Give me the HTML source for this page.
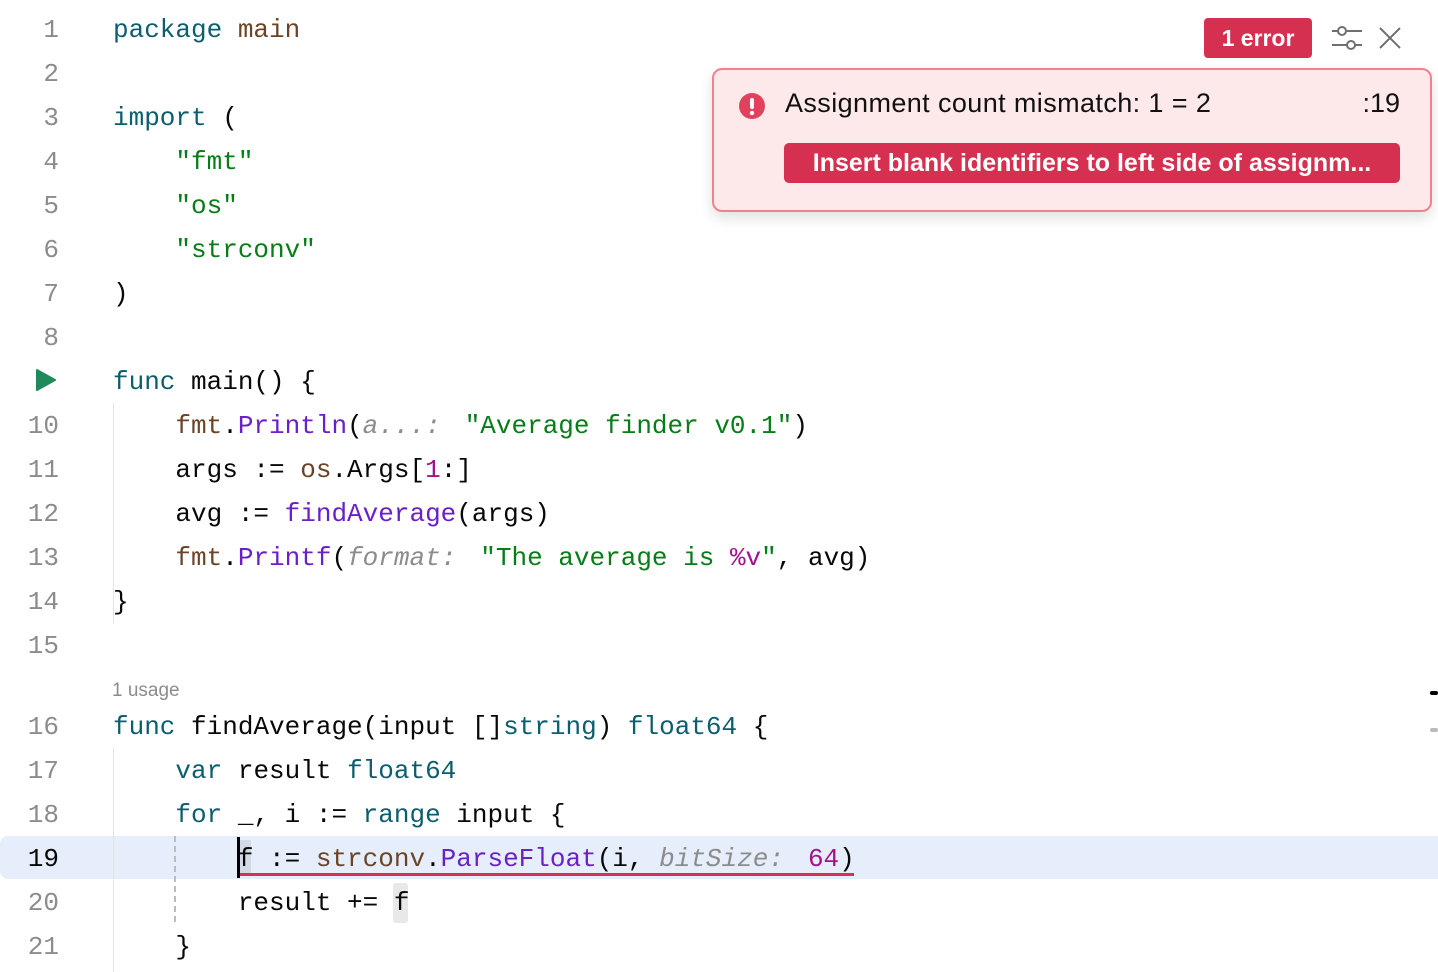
<!DOCTYPE html>
<html><head><meta charset="utf-8"><style>
html,body{margin:0;padding:0;background:#fff;width:1438px;height:972px;overflow:hidden;position:relative}
.ln{position:absolute;left:0;width:59px;text-align:right;font:26px "Liberation Mono",monospace;color:#8c8c8c;height:44px;line-height:46px}
.c{position:absolute;left:113px;font:26px "Liberation Mono",monospace;color:#080808;height:44px;line-height:46px;white-space:pre}
.k{color:#0b5e6e}.p{color:#6b4428}.s{color:#067d17}.f{color:#6a1fc9}.n{color:#a3118f}
.h{color:#8c8c8c;font-style:italic;margin-right:24px}
.ui{font-family:"Liberation Sans",sans-serif}
</style></head><body>
<div style="position:absolute;left:0;top:836px;width:1438px;height:43px;background:#e6eefb;border-radius:8px 0 0 8px"></div>
<div style="position:absolute;left:113px;top:403px;width:1px;height:220px;background:#e4e4e4"></div>
<div style="position:absolute;left:113px;top:748px;width:1px;height:224px;background:#e4e4e4"></div>
<div style="position:absolute;left:174px;top:836px;width:0;height:86px;border-left:2px dashed #bdbdbd"></div>

<div class="ln" style="top:7px">1</div><div class="c" style="top:7px"><span class="k">package</span> <span class="p">main</span></div>
<div class="ln" style="top:51px">2</div>
<div class="ln" style="top:95px">3</div><div class="c" style="top:95px"><span class="k">import</span> (</div>
<div class="ln" style="top:139px">4</div><div class="c" style="top:139px">    <span class="s">"fmt"</span></div>
<div class="ln" style="top:183px">5</div><div class="c" style="top:183px">    <span class="s">"os"</span></div>
<div class="ln" style="top:227px">6</div><div class="c" style="top:227px">    <span class="s">"strconv"</span></div>
<div class="ln" style="top:271px">7</div><div class="c" style="top:271px">)</div>
<div class="ln" style="top:315px">8</div>
<svg style="position:absolute;left:35px;top:369px" width="22" height="22"><path d="M2 1 L20 11 L2 21 Z" fill="#1f8a5b" stroke="#1f8a5b" stroke-linejoin="round" stroke-width="2"/></svg>
<div class="c" style="top:359px"><span class="k">func</span> main() {</div>
<div class="ln" style="top:403px">10</div><div class="c" style="top:403px">    <span class="p">fmt</span>.<span class="f">Println</span>(<span class="h">a...:</span><span class="s">"Average finder v0.1"</span>)</div>
<div class="ln" style="top:447px">11</div><div class="c" style="top:447px">    args := <span class="p">os</span>.Args[<span class="n">1</span>:]</div>
<div class="ln" style="top:491px">12</div><div class="c" style="top:491px">    avg := <span class="f">findAverage</span>(args)</div>
<div class="ln" style="top:535px">13</div><div class="c" style="top:535px">    <span class="p">fmt</span>.<span class="f">Printf</span>(<span class="h">format:</span><span class="s">"The average is <span class="n">%v</span>"</span>, avg)</div>
<div class="ln" style="top:579px">14</div><div class="c" style="top:579px">}</div>
<div class="ln" style="top:623px">15</div>
<div class="ui" style="position:absolute;left:112px;top:680px;font-size:19px;color:#8c8c8c">1 usage</div>
<div class="ln" style="top:704px">16</div><div class="c" style="top:704px"><span class="k">func</span> findAverage(input []<span class="k">string</span>) <span class="k">float64</span> {</div>
<div class="ln" style="top:748px">17</div><div class="c" style="top:748px">    <span class="k">var</span> result <span class="k">float64</span></div>
<div class="ln" style="top:792px">18</div><div class="c" style="top:792px">    <span class="k">for</span> _, i := <span class="k">range</span> input {</div>
<div class="ln" style="top:836px;color:#080808">19</div>
<div style="position:absolute;left:239px;top:840px;width:12px;height:36px;background:#d3dae6"></div>
<div style="position:absolute;left:393px;top:883px;width:15px;height:40px;background:#e8e8e8;border-radius:3px"></div>
<div class="c" style="top:836px">        f := <span class="p">strconv</span>.<span class="f">ParseFloat</span>(i, <span class="h">bitSize:</span><span class="n">64</span>)</div>
<div style="position:absolute;left:237px;top:837px;width:3px;height:41px;background:#000"></div>
<div style="position:absolute;left:240px;top:873px;width:614px;height:3px;background:#d6314f"></div>
<div class="ln" style="top:880px">20</div><div class="c" style="top:880px">        result += f</div>
<div class="ln" style="top:924px">21</div><div class="c" style="top:924px">    }</div>

<div style="position:absolute;left:1430px;top:691px;width:8px;height:4px;background:#000;border-radius:2px"></div>
<div style="position:absolute;left:1430px;top:728px;width:8px;height:4px;background:#bbb;border-radius:2px"></div>

<div class="ui" style="position:absolute;left:1204px;top:18px;width:108px;height:40px;background:#d63050;border-radius:4px;color:#fff;font-size:23px;font-weight:bold;line-height:40px;text-align:center">1 error</div>
<svg style="position:absolute;left:1330px;top:24px" width="34" height="28" fill="none" stroke="#6f6f6f" stroke-width="2"><path d="M2 7h6M17 7h15M2 21h15M25 21h7"/><circle cx="12" cy="7" r="4"/><circle cx="21" cy="21" r="4"/></svg>
<svg style="position:absolute;left:1378px;top:26px" width="24" height="24" stroke="#6f6f6f" stroke-width="2"><path d="M2 2L22 22M22 2L2 22"/></svg>

<div class="ui" style="position:absolute;left:712px;top:68px;width:716px;height:140px;background:#fde8ea;border:2px solid #f2818e;border-radius:10px;box-shadow:0 6px 14px rgba(0,0,0,0.12)">
<svg style="position:absolute;left:24px;top:22px" width="28" height="28"><circle cx="14" cy="14" r="13" fill="#e0425d"/><rect x="12" y="6" width="4" height="11" rx="2" fill="#fff"/><circle cx="14" cy="21" r="2.2" fill="#fff"/></svg>
<div style="position:absolute;left:71px;top:18px;font-size:27px;letter-spacing:0.4px;color:#111">Assignment count mismatch: 1 = 2</div>
<div style="position:absolute;right:30px;top:18px;font-size:27px;color:#111">:19</div>
<div style="position:absolute;left:70px;top:73px;width:616px;height:40px;background:#d63050;border-radius:5px;color:#fff;font-size:25px;font-weight:bold;line-height:40px;text-align:center">Insert blank identifiers to left side of assignm...</div>
</div>
</body></html>
